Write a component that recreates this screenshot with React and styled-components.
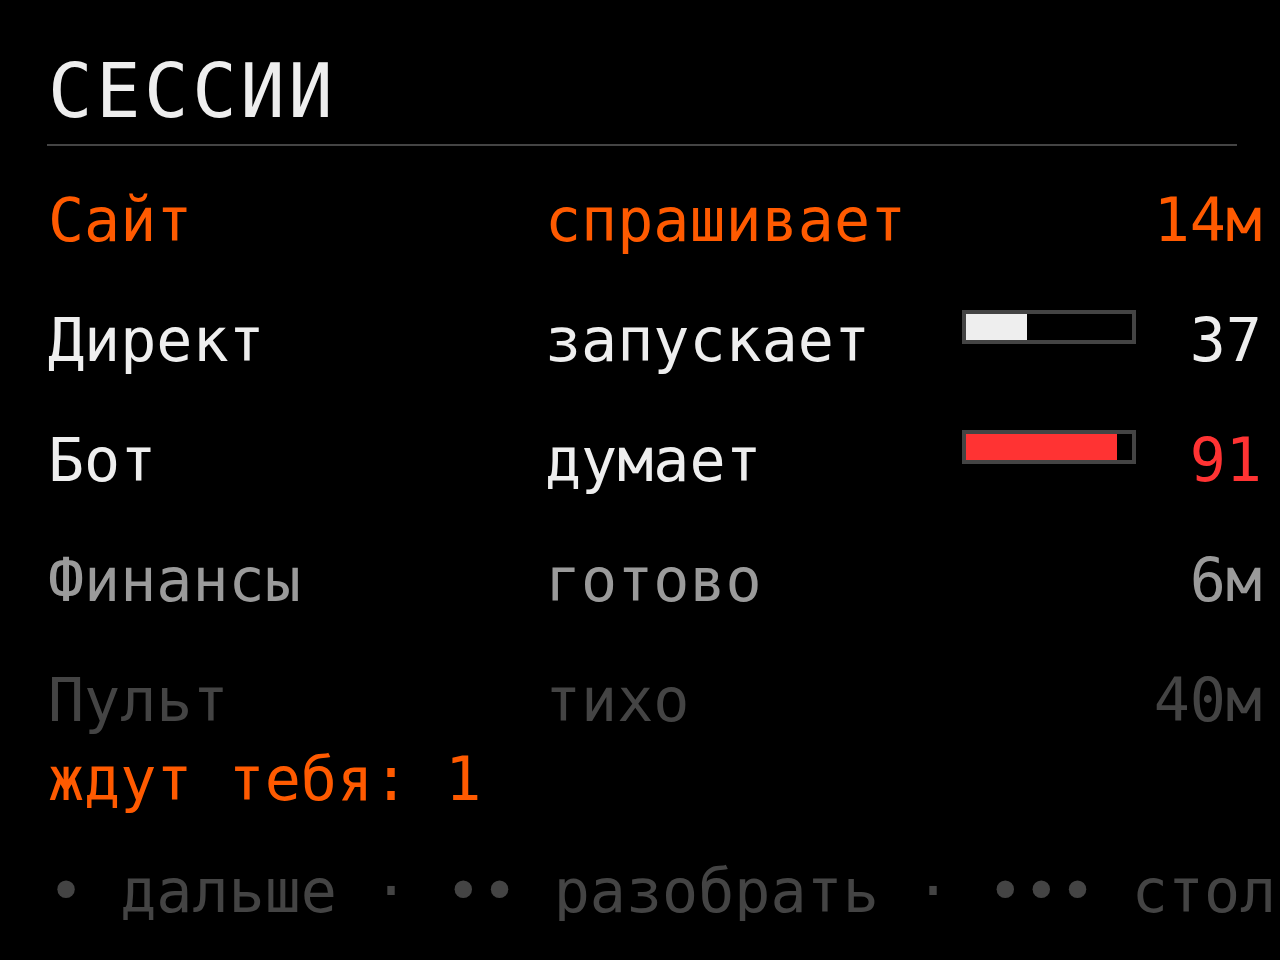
import React from 'react';
import styled, { createGlobalStyle } from 'styled-components';

const GlobalStyle = createGlobalStyle`
    html, body {
        margin: 0;
        padding: 0;
        background: #000;
    }
    body {
        font-family: "DejaVu Sans Mono", "Liberation Mono", monospace;
        overflow: hidden;
    }
`;

const tones = {
    ask: { text: '#ff5a00', value: '#ff5a00', bar: null },
    run: { text: '#eeeeee', value: '#eeeeee', bar: '#eeeeee' },
    think: { text: '#eeeeee', value: '#ff3333', bar: '#ff3333' },
    done: { text: '#9a9a9a', value: '#9a9a9a', bar: null },
    idle: { text: '#444444', value: '#444444', bar: null },
};

const sessions = [
    { name: 'Сайт', status: 'спрашивает', value: '14м', tone: 'ask' },
    { name: 'Директ', status: 'запускает', value: '37', tone: 'run', progress: 37 },
    { name: 'Бот', status: 'думает', value: '91', tone: 'think', progress: 91 },
    { name: 'Финансы', status: 'готово', value: '6м', tone: 'done' },
    { name: 'Пульт', status: 'тихо', value: '40м', tone: 'idle' },
];

export default function App() {
    const waiting = sessions.filter((s) => s.tone === 'ask').length;

    return (
        <Screen>
            <GlobalStyle />
            <Title>СЕССИИ</Title>
            <Rule />
            <List>
                {sessions.map((s) => (
                    <Row key={s.name} $color={tones[s.tone].text}>
                        <Cell>{s.name}</Cell>
                        <Cell>{s.status}</Cell>
                        <BarSlot>
                            {s.progress != null && (
                                <Bar>
                                    <Fill
                                        $color={tones[s.tone].bar}
                                        style={{ width: `${s.progress}%` }}
                                    />
                                </Bar>
                            )}
                        </BarSlot>
                        <Value $color={tones[s.tone].value}>{s.value}</Value>
                    </Row>
                ))}
            </List>
            <Waiting>ждут тебя: {waiting}</Waiting>
            <Hints>• дальше · •• разобрать · ••• стол</Hints>
        </Screen>
    );
}

const Screen = styled.div`
    width: 1280px;
    height: 960px;
    box-sizing: border-box;
    padding: 54px 18px 0 48px;
    background: #000;
    overflow: hidden;
    display: flex;
    flex-direction: column;
`;

const Title = styled.div`
    font-size: 74px;
    line-height: 74px;
    letter-spacing: 3.5px;
    color: #eeeeee;
    white-space: nowrap;
`;

const Rule = styled.div`
    width: 1190px;
    height: 2px;
    margin-top: 16px;
    margin-left: -1px;
    background: #444;
`;

const List = styled.div`
    margin-top: 44px;
    display: flex;
    flex-direction: column;
    gap: 60px;
`;

const Row = styled.div`
    display: grid;
    grid-template-columns: 497px 417px 174px 1fr;
    align-items: start;
    font-size: 60px;
    line-height: 60px;
    height: 60px;
    color: ${(p) => p.$color};
    white-space: nowrap;
`;

const Cell = styled.div``;

const BarSlot = styled.div`
    height: 60px;
`;

const Bar = styled.div`
    width: 174px;
    height: 34px;
    box-sizing: border-box;
    border: 4px solid #444;
    background: #000;
`;

const Fill = styled.div`
    height: 100%;
    background: ${(p) => p.$color};
`;

const Value = styled.div`
    text-align: right;
    color: ${(p) => p.$color};
`;

const Waiting = styled.div`
    margin-top: 19px;
    font-size: 60px;
    line-height: 60px;
    color: #ff5a00;
    white-space: nowrap;
`;

const Hints = styled.div`
    margin-top: 52px;
    margin-right: -18px;
    font-size: 60px;
    line-height: 60px;
    color: #444;
    white-space: nowrap;
    overflow: hidden;
`;
